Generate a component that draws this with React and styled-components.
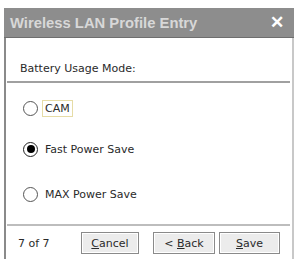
import React from 'react'
import styled, { createGlobalStyle } from 'styled-components'

const GlobalStyle = createGlobalStyle`
  html, body {
    margin: 0;
    padding: 0;
    background: #ffffff;
    font-family: "DejaVu Sans", "Liberation Sans", sans-serif;
  }
`

const Window = styled.div`
  margin: 8px 1px 0 4px;
  width: 290px;
  height: 251px;
  display: flex;
  flex-direction: column;
  overflow: hidden;
`

const TitleBar = styled.div`
  height: 29px;
  background: #8d8d8d;
  border-bottom: 1px solid #6e6e6e;
  display: flex;
  align-items: center;
  justify-content: space-between;
  padding: 0 10px 0 6px;
  color: #d8d8d8;
  font-family: "Liberation Sans", sans-serif;
  font-weight: bold;
  font-size: 14.8px;
`

const Close = styled.span`
  color: #ffffff;
  font-size: 17px;
  font-weight: bold;
`

const Body = styled.div`
  flex: 1;
  display: flex;
  flex-direction: column;
  border-left: 2px solid #8a8a8a;
  border-right: 2px solid #c8c8c8;
`

const Label = styled.div`
  margin: 24px 0 0 14px;
  font-size: 11px;
  line-height: 14px;
  color: #2a2a2a;
`

const Divider = styled.div`
  margin: ${({ top }) => top}px 2px 0 1px;
  height: 2px;
  background: ${({ light }) => (light ? '#bdbdbd' : '#a0a0a0')};
`

const Row = styled.div`
  display: flex;
  align-items: center;
  height: 16px;
  margin: ${({ top }) => top}px 0 0 17px;
  font-size: 11px;
  color: #2a2a2a;
`

const Radio = styled.span`
  width: 15px;
  height: 15px;
  box-sizing: border-box;
  border-radius: 50%;
  border: 1.5px solid ${({ checked }) => (checked ? '#222' : '#555')};
  background: #fff;
  display: flex;
  align-items: center;
  justify-content: center;
  margin-right: 4px;
  &::after {
    content: '';
    width: 8px;
    height: 8px;
    border-radius: 50%;
    background: #000;
    display: ${({ checked }) => (checked ? 'block' : 'none')};
  }
`

const Caption = styled.span`
  padding: 1px 2px;
  border: 1px solid ${({ focused }) => (focused ? '#e6dca6' : 'transparent')};
`

const Footer = styled.div`
  display: flex;
  align-items: center;
  margin-top: 6px;
  padding-left: 12px;
`

const Page = styled.span`
  width: 63px;
  font-size: 11px;
  color: #2a2a2a;
`

const Button = styled.button`
  width: ${({ w }) => w}px;
  height: 22px;
  margin-left: ${({ gap }) => gap || 0}px;
  box-sizing: border-box;
  background: #ececec;
  border: 1px solid #8a8a8a;
  box-shadow: inset 0 0 0 1px #ffffff;
  font-family: "DejaVu Sans", "Liberation Sans", sans-serif;
  font-size: 11px;
  color: #2a2a2a;
  padding: 0;
  u { text-decoration: underline; }
`

export default function App() {
  return (
    <>
      <GlobalStyle />
      <Window>
        <TitleBar>
          <span>Wireless LAN Profile Entry</span>
          <Close>✕</Close>
        </TitleBar>
        <Body>
          <Label>Battery Usage Mode:</Label>
          <Divider top={5} />
          <Row top={17}>
            <Radio />
            <Caption focused>CAM</Caption>
          </Row>
          <Row top={25}>
            <Radio checked />
            <Caption>Fast Power Save</Caption>
          </Row>
          <Row top={29}>
            <Radio />
            <Caption>MAX Power Save</Caption>
          </Row>
          <Divider top={22} light />
          <Footer>
            <Page>7 of 7</Page>
            <Button w={58}><u>C</u>ancel</Button>
            <Button w={62} gap={14}>&lt; <u>B</u>ack</Button>
            <Button w={61} gap={4}><u>S</u>ave</Button>
          </Footer>
        </Body>
      </Window>
    </>
  )
}
